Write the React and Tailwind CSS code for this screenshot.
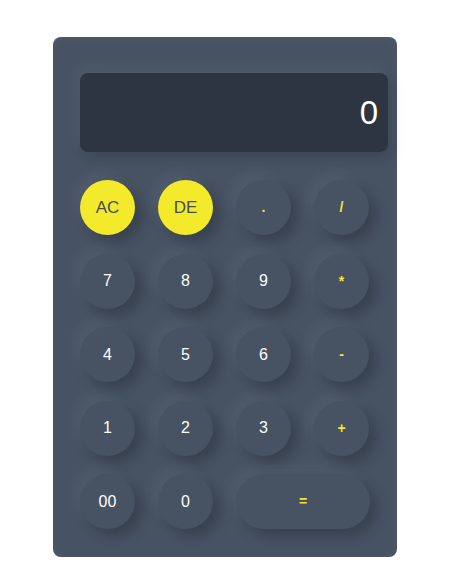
const keys = [
  { label: 'AC', kind: 'yellow' },
  { label: 'DE', kind: 'yellow' },
  { label: '.', kind: 'op' },
  { label: '/', kind: 'op' },
  { label: '7' },
  { label: '8' },
  { label: '9' },
  { label: '*', kind: 'op' },
  { label: '4' },
  { label: '5' },
  { label: '6' },
  { label: '-', kind: 'op' },
  { label: '1' },
  { label: '2' },
  { label: '3' },
  { label: '+', kind: 'op' },
  { label: '00' },
  { label: '0' },
  { label: '=', kind: 'op', wide: true },
]

const soft = 'shadow-[-7px_-7px_14px_rgba(255,255,255,0.05),7px_7px_14px_rgba(0,0,0,0.22)]'

function Key({ label, kind, wide }) {
  const base = `flex h-[55px] items-center justify-center ${soft}`
  if (kind === 'yellow') {
    return <button className={`${base} w-[55px] rounded-full bg-[#f3ea2b] text-[17px] text-[#474d55]`}>{label}</button>
  }
  return (
    <button
      className={`${base} ${wide ? 'col-span-2 w-[134px] rounded-[28px]' : 'w-[55px] rounded-full'} bg-[#475263] ${
        kind === 'op' ? 'text-[14px] font-bold text-[#f0e72d]' : 'text-[16px] text-white'
      }`}
    >
      {label}
    </button>
  )
}

export default function App() {
  return (
    <div className="min-h-[588px] bg-white pt-[37px] pl-[53px] font-['Liberation_Sans',Arial,sans-serif]">
      <div className="h-[520px] w-[344px] rounded-[8px] bg-[#475263] pt-[36px] pl-[27px] shadow-[inset_0_2px_12px_rgba(255,255,255,0.04)]">
        <div className="flex h-[79px] w-[308px] items-center justify-end rounded-[8px] bg-[#2d3540] pr-[10px] text-[33px] text-white shadow-[-4px_-6px_14px_rgba(255,255,255,0.06),4px_6px_14px_rgba(0,0,0,0.15)]">
          0
        </div>
        <div className="mt-[28px] grid w-[290px] grid-cols-[repeat(4,55px)] gap-x-[23px] gap-y-[18.5px]">
          {keys.map((k) => (
            <Key key={k.label} {...k} />
          ))}
        </div>
      </div>
    </div>
  )
}
